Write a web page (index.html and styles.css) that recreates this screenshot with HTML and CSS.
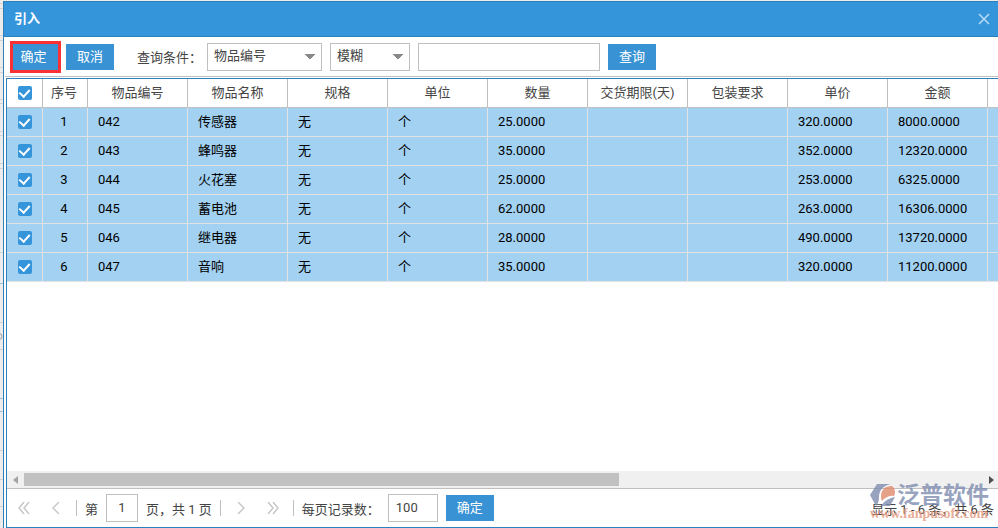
FILE: index.html
```
<!DOCTYPE html>
<html lang="zh-CN">
<head>
    <meta charset="UTF-8">
    <title>引入</title>

    <link rel="stylesheet" href="styles.css">
</head>
<body>

<!-- edge of the form that lies under the dialog -->
<svg class="backdrop" width="3" height="528" viewBox="0 0 3 528">
    <path stroke="#d2d2d2" d="M0 3.5H3M0 8.5H3M0 35.5H3M0 40.5H3M0 67.5H3M0 72.5H3M0 99.5H3M0 103.5H3M0 131.5H3M0 135.5H3M0 163.5H3M0 168.5H3M0 252.5H3M0 322.5H3M0 349.5H3M0 450.5H3M0 479.5H3M0 506.5H3"/>
    <path stroke="#9cc0dc" d="M0 283.5H3M0 398.5H3M0 411.5H3"/>
    <circle cx="-1" cy="336.5" r="3" fill="none" stroke="#999"/>
</svg>

<div class="dialog">
    <header class="title-bar">
        <h1>引入</h1>
        <button type="button" class="close" aria-label="关闭">
            <svg width="12" height="12" viewBox="0 0 12 12"><path d="M1 1L11 11M11 1L1 11"/></svg>
        </button>
    </header>

    <form class="toolbar">
        <button type="button" class="btn marked">确定</button>
        <button type="button" class="btn">取消</button>
        <label class="query-label" for="field">查询条件：</label>
        <select id="field" class="field">
            <option>物品编号</option>
        </select>
        <select class="match" aria-label="匹配方式">
            <option>模糊</option>
        </select>
        <input type="text" class="keyword" aria-label="关键字">
        <button type="button" class="btn">查询</button>
    </form>

    <div class="panel">
        <div class="grid">
            <table>
                <colgroup>
                    <col class="col-check">
                    <col class="col-no">
                    <col span="10">
                </colgroup>
                <thead>
                    <tr>
                        <th><input type="checkbox" aria-label="全选" checked></th>
                        <th>序号</th>
                        <th>物品编号</th>
                        <th>物品名称</th>
                        <th>规格</th>
                        <th>单位</th>
                        <th>数量</th>
                        <th>交货期限(天)</th>
                        <th>包装要求</th>
                        <th>单价</th>
                        <th>金额</th>
                        <th></th>
                    </tr>
                </thead>
                <tbody id="rows"></tbody>
            </table>
        </div>

        <div class="scrollbar">
            <svg class="arrow" width="5" height="8" viewBox="0 0 5 8"><path fill="#a3a3a3" d="M5 0V8L0 4z"/></svg>
            <div class="track"><div class="thumb"></div></div>
            <svg class="arrow" width="5" height="8" viewBox="0 0 5 8"><path fill="#505050" d="M0 0V8L5 4z"/></svg>
        </div>

        <footer class="pager">
            <div class="nav-group">
                <button type="button" class="nav" aria-label="首页">
                    <svg width="12" height="12" viewBox="0 0 12 12"><path d="M6 0L1 6L6 12M11 0L6 6L11 12"/></svg>
                </button>
                <button type="button" class="nav" aria-label="上一页">
                    <svg width="12" height="12" viewBox="0 0 12 12"><path d="M9 0L3 6L9 12"/></svg>
                </button>
            </div>
            <i class="sep"></i>
            <label for="page">第</label>
            <input type="text" id="page" class="page" value="1">
            <span class="total">页，共 1 页</span>
            <i class="sep"></i>
            <div class="nav-group">
                <button type="button" class="nav" aria-label="下一页">
                    <svg width="12" height="12" viewBox="0 0 12 12"><path d="M3 0L9 6L3 12"/></svg>
                </button>
                <button type="button" class="nav" aria-label="末页">
                    <svg width="12" height="12" viewBox="0 0 12 12"><path d="M1 0L6 6L1 12M6 0L11 6L6 12"/></svg>
                </button>
            </div>
            <i class="sep"></i>
            <label for="size">每页记录数：</label>
            <input type="text" id="size" class="size" value="100">
            <button type="button" class="btn">确定</button>
            <span class="summary">显示 1 - 6 条，共 6 条</span>
        </footer>
    </div>
</div>

<div class="watermark">
    <svg width="26" height="23" viewBox="0 0 26 23">
        <path fill="#7f8db0" d="M7 0H21C14 1 9 6 9 13C9 17 8 20 6 22L0 11z"/>
        <path fill="#e08a6c" d="M11 12C11 6 15 2 22 2C25 4 26 9 24 12C21 11 15 13 12 17C11 15 11 14 11 12z"/>
        <path fill="#7f8db0" d="M11 22C14 17 19 14 25 13L20 22z"/>
    </svg>
    <span class="brand">泛普软件</span>
    <span class="site">www.fanpusoft.com</span>
</div>

<script src="script.js"></script>
</body>
</html>
```
FILE: styles.css
```
* {
    box-sizing: border-box;
}

body {
    margin: 0;
    padding: 1px 0 0 3px;
    height: 100vh;
    overflow: hidden;
    background: #ececec;
    color: #444;
    font-family: Roboto, "Noto Sans CJK SC", sans-serif;
    font-size: 13px;
}

button, input, select {
    font: inherit;
    color: inherit;
    margin: 0;
}

.backdrop {
    position: absolute;
    left: 0;
    top: 0;
}

.dialog {
    height: 100%;
    display: flex;
    flex-direction: column;
    background: #fff;
    border-left: 1px solid #2f80b9;
}

.title-bar {
    height: 36px;
    flex: none;
    display: flex;
    align-items: center;
    justify-content: space-between;
    padding: 0 8px 0 10px;
    background: #3595db;
    border-top: 1px solid #2b81bd;
    border-bottom: 1px solid #2b81bd;
}

.title-bar h1 {
    margin: 0;
    color: #fff;
    font-size: 13px;
    line-height: 20px;
    font-weight: bold;
}

.close {
    display: flex;
    padding: 0;
    border: 0;
    background: none;
}

.close path {
    fill: none;
    stroke: #b5d9f2;
    stroke-width: 1.6;
}

.toolbar {
    height: 40px;
    flex: none;
    display: flex;
    align-items: center;
    margin-left: 1px;
    padding-left: 5px;
    border-bottom: 1px solid #c0c0c0;
}

.btn {
    width: 48px;
    height: 26px;
    padding: 0;
    border: 0;
    background: #3892d4;
    color: #fff;
    line-height: 26px;
}

.marked {
    width: 51px;
    height: 32px;
    margin-right: 5px;
    padding-right: 4px;
    border: 3px solid #fa3034;
}

.query-label {
    margin: 0 5px 0 23px;
}

select, input[type="text"] {
    height: 28px;
    padding: 0 6px 2px;
    border: 1px solid #c0c0c0;
    border-radius: 0;
    background: #fff;
    outline: 0;
}

select {
    appearance: none;
    margin-right: 8px;
    background: conic-gradient(from -40deg at 50% 100%, #888 80deg, transparent 0) right 6px center / 10px 6px no-repeat;
}

.field {
    width: 115px;
}

.match {
    width: 80px;
}

.keyword {
    width: 182px;
    margin-right: 8px;
}

.panel {
    flex: 1;
    min-height: 0;
    display: flex;
    flex-direction: column;
    margin: 1px 0 0 2px;
    border: 1px solid #2b81bd;
    border-right: 0;
}

.grid {
    flex: 1;
    min-height: 0;
    overflow: hidden;
}

table {
    width: 1081px;
    table-layout: fixed;
    border-collapse: separate;
    border-spacing: 0;
}

col {
    width: 100px;
}

.col-check {
    width: 36px;
}

.col-no {
    width: 45px;
}

th, td {
    height: 29px;
    padding: 0;
    line-height: 20px;
    font-weight: normal;
    border-right: 1px solid #c0c0c0;
    border-bottom: 1px solid #c0c0c0;
}

td {
    padding-left: 10px;
    background: #a2d1f2;
    border-color: #e2e2e2;
    color: #000;
}

td:nth-child(-n+2) {
    padding-left: 0;
    text-align: center;
}

th:nth-child(2), td:nth-child(2) {
    padding-right: 2px;
}

input[type="checkbox"] {
    appearance: none;
    display: grid;
    place-items: center;
    width: 14px;
    height: 14px;
    margin: 0 auto;
    border-radius: 2px;
    background: #3595db;
}

input[type="checkbox"]:checked::before {
    content: "";
    width: 5px;
    height: 8px;
    margin-bottom: 2px;
    border: solid #fff;
    border-width: 0 2px 2px 0;
    transform: rotate(42deg);
}

.scrollbar {
    height: 17px;
    flex: none;
    display: flex;
    align-items: center;
    padding: 0 4px 0 6px;
    background: #f0f0f0;
}

.track {
    flex: 1;
    margin: 0 6px;
}

.thumb {
    width: 62%;
    height: 13px;
    background: #c1c1c1;
}

.pager {
    height: 39px;
    flex: none;
    display: flex;
    align-items: center;
    padding: 0 4px 0 11px;
    border-top: 1px solid #c0c0c0;
}

.nav-group {
    display: flex;
    gap: 20px;
    margin-right: 14px;
}

.sep + .nav-group {
    margin-left: 6px;
}

.nav {
    display: flex;
    padding: 0;
    border: 0;
    background: none;
}

.nav path {
    fill: none;
    stroke: #c4c4c4;
    stroke-width: 1.4;
}

.sep {
    width: 1px;
    height: 16px;
    margin-right: 8px;
    background: #c0c0c0;
}

.pager .page {
    width: 32px;
    margin: 0 8px;
    padding: 0 0 2px;
    text-align: center;
}

.total {
    margin-right: 8px;
}

.pager .size {
    width: 50px;
    margin: 0 8px;
    padding: 0 7px 2px;
}

.summary {
    margin-left: auto;
}

/* company mark, floats over the lower right corner */
.watermark {
    position: absolute;
    right: 9px;
    bottom: 8px;
    display: grid;
    grid-template-columns: 26px auto;
    column-gap: 1px;
    opacity: 0.8;
    pointer-events: none;
}

.brand {
    color: #7f8db0;
    font-size: 23px;
    line-height: 24px;
    font-weight: bold;
}

.site {
    grid-column: 1 / 3;
    color: #e39a80;
    font: bold 14px/12px "Liberation Serif", serif;
}
```
FILE: script.js
```
var rows = [
    ['042', '传感器', '无', '个', '25.0000', '', '', '320.0000', '8000.0000'],
    ['043', '蜂鸣器', '无', '个', '35.0000', '', '', '352.0000', '12320.0000'],
    ['044', '火花塞', '无', '个', '25.0000', '', '', '253.0000', '6325.0000'],
    ['045', '蓄电池', '无', '个', '62.0000', '', '', '263.0000', '16306.0000'],
    ['046', '继电器', '无', '个', '28.0000', '', '', '490.0000', '13720.0000'],
    ['047', '音响', '无', '个', '35.0000', '', '', '320.0000', '11200.0000']
];

document.getElementById('rows').innerHTML = rows.map(function(row, i) {

    return '<tr><td><input type="checkbox" aria-label="选择 ' + row[0] + '" checked></td>' +
        '<td>' + (i + 1) + '</td>' +
        row.map(function(text) { return '<td>' + text + '</td>'; }).join('') +
        '<td></td></tr>';
}).join('');
```
